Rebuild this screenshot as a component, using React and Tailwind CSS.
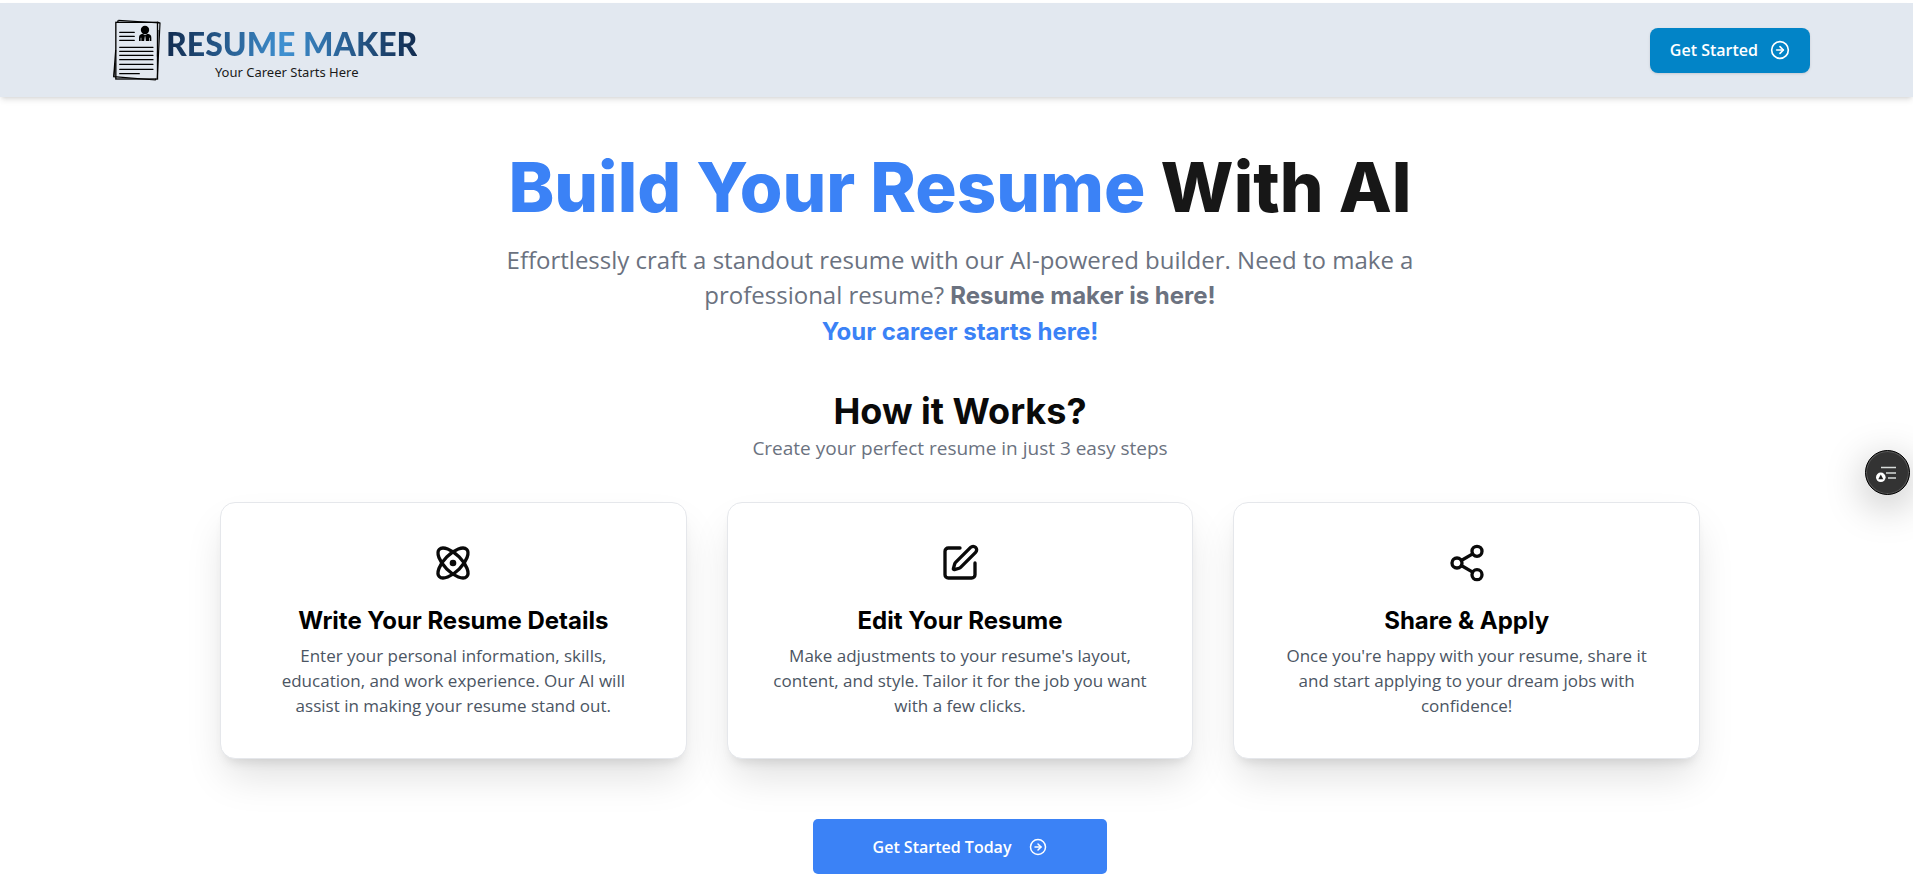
import React from 'react';
import { Atom, SquarePen, Share2, CircleArrowRight } from 'lucide-react';

const steps = [
  {
    Icon: Atom,
    title: 'Write Your Resume Details',
    lines: [
      'Enter your personal information, skills,',
      'education, and work experience. Our AI will',
      'assist in making your resume stand out.',
    ],
  },
  {
    Icon: SquarePen,
    title: 'Edit Your Resume',
    lines: [
      "Make adjustments to your resume's layout,",
      'content, and style. Tailor it for the job you want',
      'with a few clicks.',
    ],
  },
  {
    Icon: Share2,
    title: 'Share & Apply',
    lines: [
      "Once you're happy with your resume, share it",
      'and start applying to your dream jobs with',
      'confidence!',
    ],
  },
];

function ResumeIcon() {
  return (
    <svg className="h-16 w-[50px] shrink-0" viewBox="36 24 150 192" fill="none" stroke="#000" aria-hidden="true">
      <path d="M55 31 L180 39 L172 204" strokeWidth="3.5" />
      <path d="M55 31 L53 36 M172 36 L179 39" strokeWidth="4" />
      <path d="M47 120 L41 200 L166 210 L168 206" strokeWidth="3.5" />
      <path d="M174 60 L172 140 M45 160 L42 200" strokeWidth="3" />
      <rect x="47.5" y="37" width="125" height="170" strokeWidth="4" />
      <g strokeWidth="3.6" strokeLinecap="round">
        <path d="M59 67H103M59 79H103M59 91H103" />
        <path d="M59 112H159M59 124H159M59 136H159M59 149H159M59 163H159M59 178H159M59 191H118" />
      </g>
      <g fill="#000" stroke="none">
        <circle cx="135" cy="60" r="12.5" />
        <path d="M117 93V83Q117 73 128 71.500L135 76L143 71.500Q154 73 154 83V93H149V83H147V93H137.500L136 79H134.500L132.500 93H124V83H122V93Z" />
      </g>
    </svg>
  );
}

function Logo() {
  return (
    <a href="#" className="flex items-center gap-1">
      <ResumeIcon />
      <span className="flex flex-col items-center pt-[9px]">
        <span className="bg-linear-to-r from-[#122c50] via-[#3f91d2] via-47% to-[#122c50] bg-clip-text font-['Lato'] text-[32px] leading-8 font-black text-transparent">
          RESUME MAKER
        </span>
        <span className="mt-[3px] pr-2.5 font-['Noto_Sans'] text-[13px] leading-[18px] text-[#1a1a1a]">
          Your Career Starts Here
        </span>
      </span>
    </a>
  );
}

function StepCard({ Icon, title, lines }) {
  return (
    <article className="flex flex-col items-center rounded-[15px] border border-[#e5e7eb] bg-white py-10 text-center shadow-[0_22px_40px_-6px_rgba(0,0,0,0.13),0_8px_12px_-6px_rgba(0,0,0,0.12)]">
      <Icon className="size-10" aria-hidden="true" />
      <h3 className="mt-[22px] font-['Inter'] text-2xl leading-8 font-bold text-black">{title}</h3>
      <p className="mt-1.5 text-[17px] leading-[25px] text-[#4b5563]">
        {lines.map((line) => (
          <span key={line} className="block">
            {line}
          </span>
        ))}
      </p>
    </article>
  );
}

function FloatingReader() {
  return (
    <button
      type="button"
      aria-label="Open reading list"
      className="fixed top-[450px] right-[3px] flex size-[45px] items-center justify-center rounded-full border border-black bg-[#333] shadow-[0_10px_40px_rgba(0,0,0,0.28)] ring-1 ring-[#5a5a5a] ring-inset"
    >
      <svg className="size-6" viewBox="0 0 24 24" aria-hidden="true">
        <path d="M5 6.500H20M10 12H20M12 17H20" stroke="#d8dcda" strokeWidth="1.300" fill="none" />
        <circle cx="4.800" cy="16.300" r="4.800" fill="#fff" />
        <path d="M4.800 13.500L7.300 18.300H2.300Z" fill="#222" />
      </svg>
    </button>
  );
}

export default function App() {
  return (
    <div className="min-h-screen bg-white pt-[3px] font-['Open_Sans',sans-serif] text-neutral-950">
      <header className="flex h-[94px] items-center justify-between bg-[#e2e8f0] pr-[103px] pl-28 shadow-md">
        <Logo />
        <button
          type="button"
          className="flex h-[45px] items-center gap-3 rounded-lg bg-[#0284c7] px-5 text-base font-semibold text-white shadow-sm"
        >
          Get Started
          <CircleArrowRight className="size-5" aria-hidden="true" />
        </button>
      </header>

      <main className="flex flex-col items-center pt-[54px] pl-[7px] text-center">
        <h1 className="font-['Inter'] text-[69px] leading-[72px] font-extrabold text-neutral-900">
          <span className="text-[#3b82f6]">Build Your Resume</span> With AI
        </h1>
        <p className="mt-[19px] text-2xl leading-[35px] text-[#6b7280]">
          Effortlessly craft a standout resume with our AI-powered builder. Need to make a
          <br />
          professional resume? <b className="font-['Inter'] font-bold">Resume maker is here!</b>
          <br />
          <b className="font-['Inter'] font-bold text-[#3b82f6]">Your career starts here!</b>
        </p>

        <h2 className="mt-[42px] font-['Inter'] text-4xl font-bold">How it Works?</h2>
        <p className="mt-[3px] text-[19px] leading-7 text-[#6b7280]">
          Create your perfect resume in just 3 easy steps
        </p>

        <section className="mt-10 grid w-full max-w-[1480px] grid-cols-3 gap-10">
          {steps.map((step) => (
            <StepCard key={step.title} {...step} />
          ))}
        </section>

        <button
          type="button"
          className="mt-[60px] flex h-[55px] items-center gap-[18px] rounded-[5px] bg-[#3b82f6] px-[60px] text-base font-semibold text-white"
        >
          Get Started Today
          <CircleArrowRight className="size-[18px]" aria-hidden="true" />
        </button>
      </main>

      <FloatingReader />
    </div>
  );
}
